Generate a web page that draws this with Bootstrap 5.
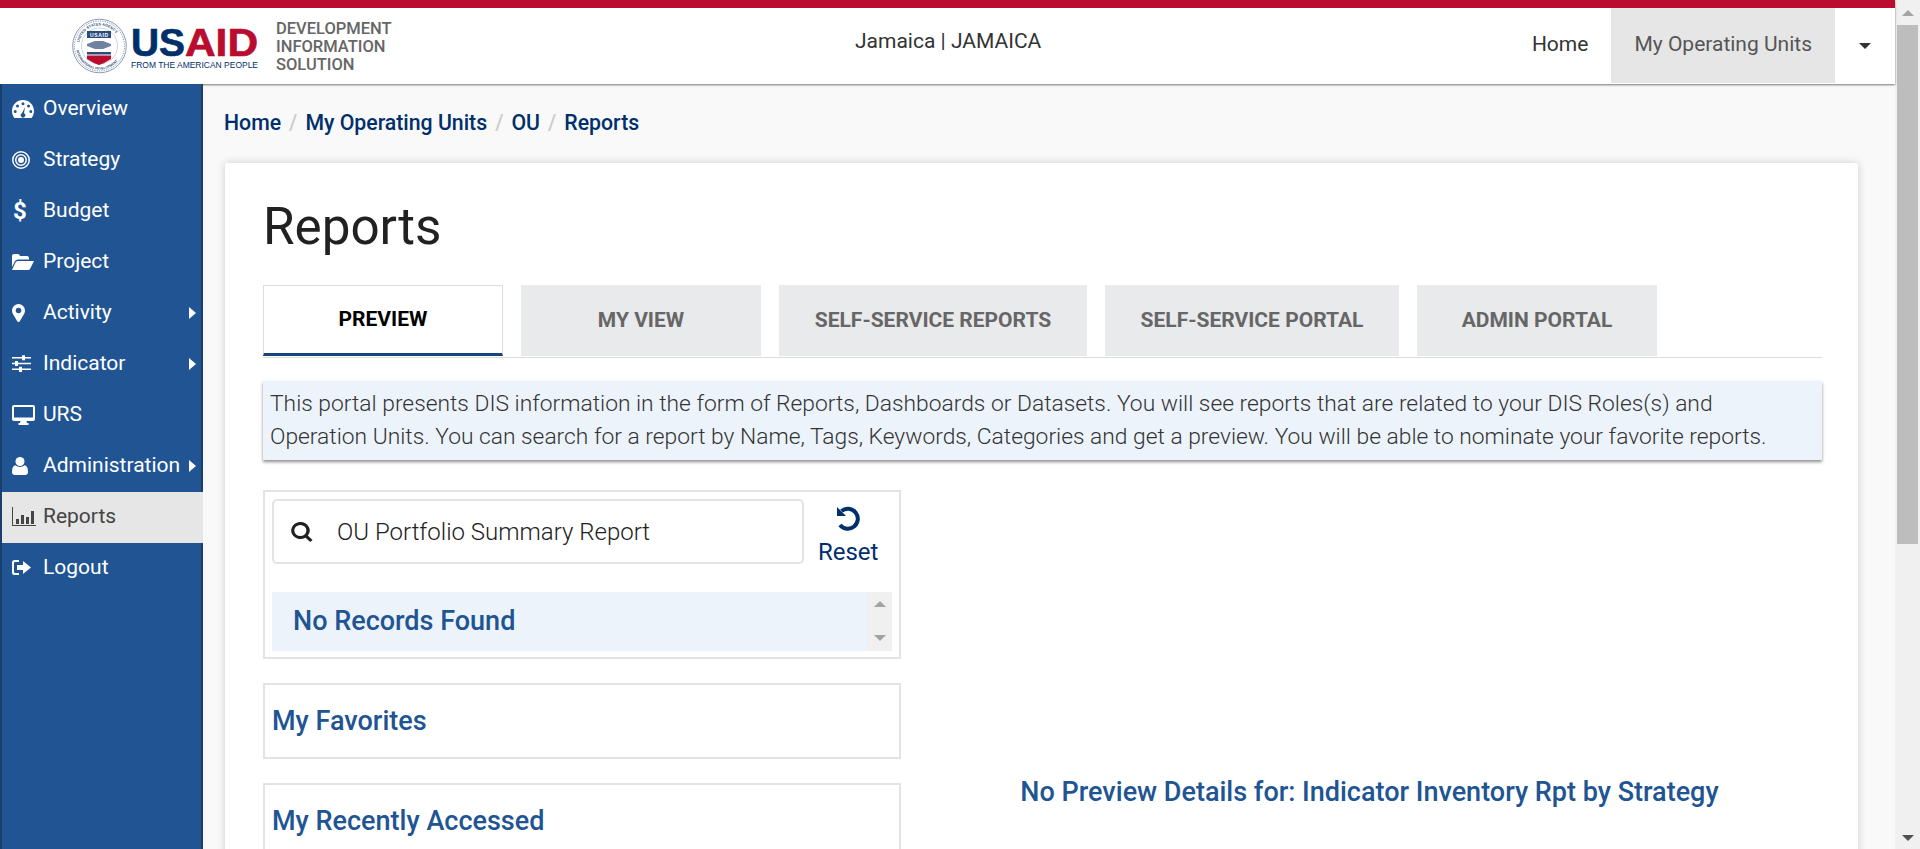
<!DOCTYPE html>
<html lang="en">
<head>
  <meta charset="UTF-8" />
  <title>Reports</title>
  <meta name="viewport" content="width=device-width, initial-scale=1" />
  <link href="https://cdn.jsdelivr.net/npm/bootstrap@5.3.0/dist/css/bootstrap.min.css" rel="stylesheet" />
  <style>
    html, body {
      height: 100%;
      overflow: hidden;
    }
    body {
      font-family: Roboto, "Liberation Sans", sans-serif;
      font-size: 21px;
      background: #f9f9f9;
      color: #212121;
    }

    /* top bar */
    .top-bar {
      height: 84px;
      flex: 0 0 84px;
      border-top: 8px solid #ba0c2f;
      background: #fff;
      box-shadow: 0 1px 2px #777;
      position: relative;
      z-index: 1;
      padding: 0;
    }
    .logo-wrap { width: 72px; flex: 0 0 72px; }
    .usaid-logo { display: block; }
    .dis-name {
      margin-left: 14px;
      width: 140px;
      font-size: 16.5px;
      line-height: 18px;
      font-weight: 500;
      color: #666;
      text-transform: uppercase;
    }
    .ou-name {
      position: absolute;
      left: 855px;
      top: 18px;
      color: #333;
      line-height: 30px;
    }
    .top-link {
      color: #333;
      display: flex;
      align-items: center;
      height: 75px;
      padding: 0 23px 2px;
      text-decoration: none;
    }
    .top-link.current { background: #e6e6e6; color: #555; }
    .top-caret {
      width: 60px;
      display: flex;
      justify-content: center;
      align-items: center;
    }
    .top-caret i {
      border-top: 6px solid #333;
      border-left: 6px solid transparent;
      border-right: 6px solid transparent;
      margin-top: 1px;
    }

    /* side menu */
    .side-menu {
      width: 203px;
      flex: 0 0 203px;
      background: #205493;
      border-left: 2px solid #1a3f6f;
      border-right: 2px solid #1a3f6f;
      position: relative;
      z-index: 2;
    }
    .side-menu .nav-link {
      height: 51px;
      width: 201px;
      padding: 0 0 2px 10px;
      color: #fff;
      display: flex;
      align-items: center;
      position: relative;
    }
    .side-menu .nav-link.active { background: #e6e6e6; color: #444; }
    .side-ico { width: 31px; flex: 0 0 31px; display: flex; align-items: center; }
    .side-ico svg { display: block; fill: currentColor; }
    .side-dollar { font-size: 24px; font-weight: 700; line-height: 1; padding-left: 1px; }
    .side-arrow {
      position: absolute;
      left: 187px;
      top: 19px;
      border-left: 7px solid #fff;
      border-top: 6.5px solid transparent;
      border-bottom: 6.5px solid transparent;
    }

    /* content */
    .main-area {
      padding: 0 37px 0 22px;
      min-width: 0;
    }
    .crumbs {
      margin: 0 0 0 -1px;
      height: 79px;
      padding: 23px 0 0;
      font-size: 21.28px;
      font-weight: 500;
      --bs-breadcrumb-divider-color: #ccc;
      --bs-breadcrumb-item-padding-x: 8px;
    }
    .crumbs a { color: #002f6c; text-decoration: none; }
    .report-card {
      border: 0;
      border-radius: 2px;
      box-shadow: 0 0 8px rgba(0, 0, 0, .18);
      padding: 35px 36px 0 38px;
      height: 800px;
    }
    .page-title {
      font-size: 51.2px;
      line-height: 58px;
      font-weight: 400;
      margin: 0 0 29px;
      color: #212121;
    }
    .report-tabs {
      gap: 18px;
      border-bottom: 1px solid #ddd;
      padding-bottom: 1px;
    }
    .report-tabs .nav-link {
      height: 71px;
      background: #e9eaec;
      color: #666;
      font-weight: 700;
      font-size: 21px;
      text-transform: uppercase;
      border-radius: 0;
      display: flex;
      align-items: center;
      justify-content: center;
      padding: 0;
    }
    .report-tabs .nav-link.active {
      background: #fff;
      color: #000;
      border: 1px solid #ddd;
      border-bottom: 3px solid #1a4480;
    }
    .info-note {
      margin: 23px 0 30px;
      background: #edf3fb;
      box-shadow: 0 2px 3px rgba(0, 0, 0, .45);
      padding: 6px 7px;
      line-height: 33px;
      height: 79px;
      font-size: 22.8px;
      color: #333;
      font-weight: 300;
      white-space: nowrap;
    }
    .left-pane { width: 638px; flex: 0 0 638px; }
    .right-pane { padding-top: 282px; text-align: center; color: #205493; font-size: 27px; font-weight: 500; }
    .pane-box {
      border: 2px solid #e3e3e3;
      padding: 7px 7px 6px;
      margin-bottom: 24px;
    }
    .search-wrap {
      width: 534px;
      height: 65px;
      border: 2px solid #e3e3e3;
      border-radius: 5px;
      padding: 0 14px 0 17px;
    }
    .search-wrap input {
      border: 0;
      padding: 0;
      margin-left: 24px;
      font-size: 24px;
      font-weight: 300;
      color: #212121;
      box-shadow: none;
    }
    .reset-btn {
      width: 88px;
      padding: 0;
      border: 0;
      color: #002f6c;
      font-size: 24px;
      line-height: 26px;
      margin-top: 5px;
    }
    .reset-btn svg { margin-bottom: 7px; flex: none; }
    .no-rows {
      margin-top: 27px;
      height: 59px;
      background: #edf3fb;
    }
    .no-rows span {
      padding-left: 21px;
      color: #205493;
      font-size: 27px;
      font-weight: 500;
    }
    .mini-scroll {
      width: 25px;
      background: #f0f0f0;
      padding: 9px 0 10px;
    }
    .pane-head {
      color: #205493;
      font-size: 27px;
      font-weight: 500;
      line-height: 32px;
      height: 72px;
      padding-top: 20px;
      margin: 0;
    }
    .pane-box.head-box { padding: 0 7px; }

    /* window scrollbar */
    .win-scroll {
      width: 25px;
      flex: 0 0 25px;
      background: #f0f0f0;
      padding: 10px 2px 8px;
    }
    .win-scroll i, .mini-scroll i { display: block; margin: 0 auto; width: 0; height: 0; flex: none; }
    .arrow-up {
      border-bottom: 6px solid #a3a3a3;
      border-left: 6px solid transparent;
      border-right: 6px solid transparent;
    }
    .arrow-down {
      border-top: 6px solid #a3a3a3;
      border-left: 6px solid transparent;
      border-right: 6px solid transparent;
    }
    .win-scroll .arrow-down { border-top-color: #505050; margin-top: auto; }
    .win-thumb { height: 519px; background: #bdbdbd; margin-top: 9px; }
  </style>
</head>
<body class="d-flex">
  <div class="d-flex flex-column flex-grow-1" style="min-width:0">
    <nav class="navbar top-bar flex-nowrap justify-content-start align-items-start">
      <div class="logo-wrap"></div>
      <svg class="usaid-logo" width="190" height="68" viewBox="0 0 190 68" xmlns="http://www.w3.org/2000/svg">
        <defs>
          <path id="sealTop" d="M7 38 A20.500 20.500 0 0 1 48 38" />
          <path id="sealBot" d="M4 38 A23.500 23.500 0 0 0 51 38" />
        </defs>
        <circle cx="27.500" cy="38" r="26.800" fill="#fff" stroke="#8a9bb4" stroke-width="1" />
        <circle cx="27.500" cy="38" r="25" fill="none" stroke="#2b4c7e" stroke-width=".7" stroke-dasharray="1 1.400" />
        <circle cx="27.500" cy="38" r="18" fill="none" stroke="#a9b6c9" stroke-width=".6" />
        <text font-family="Liberation Sans" font-size="3.800" font-weight="700" fill="#33507d"><textPath href="#sealTop" startOffset="6%">UNITED STATES AGENCY</textPath></text>
        <text font-family="Liberation Sans" font-size="3.300" font-weight="700" fill="#33507d"><textPath href="#sealBot" startOffset="6%">INTERNATIONAL DEVELOPMENT</textPath></text>
        <rect x="15" y="23" width="24" height="7" fill="#2b4c7e" />
        <text x="27" y="28.600" text-anchor="middle" font-family="Liberation Sans" font-size="5" font-weight="700" fill="#fff" textLength="18">USAID</text>
        <path d="M15 36 L23 33 L31 33 L39 36 L39 38 L31 41 L23 41 L15 38 Z" fill="#6f82a0" />
        <rect x="15" y="44" width="24" height="2.500" fill="#2b4c7e" />
        <path d="M15 47.500 H39 V51 Q33 55 27 57 Q21 55 15 51 Z" fill="#ba0c2f" />
        <text x="59" y="48" font-family="Liberation Sans" font-size="39" font-weight="700" fill="#002f6c" stroke="#002f6c" stroke-width=".7" textLength="54" lengthAdjust="spacingAndGlyphs">US</text>
        <text x="113" y="48" font-family="Liberation Sans" font-size="39" font-weight="700" fill="#ba0c2f" stroke="#ba0c2f" stroke-width=".7" textLength="73" lengthAdjust="spacingAndGlyphs">AID</text>
        <text x="59" y="60" font-family="Liberation Sans" font-size="9.500" fill="#002f6c" textLength="127" lengthAdjust="spacingAndGlyphs">FROM THE AMERICAN PEOPLE</text>
      </svg>
      <div class="dis-name mt-2 pt-1">Development Information Solution</div>
      <div class="ou-name">Jamaica | JAMAICA</div>
      <div class="d-flex ms-auto">
        <a class="top-link" href="#">Home</a>
        <a class="top-link current" href="#">My Operating Units</a>
        <div class="top-caret"><i></i></div>
      </div>
    </nav>

    <div class="d-flex flex-grow-1" style="min-height:0">
      <div class="side-menu nav flex-column flex-nowrap">
        <a class="nav-link" href="#"><span class="side-ico"><svg width="22" height="18" viewBox="0 0 22 18"><path fill-rule="evenodd" d="M11 0C4.900 0 0 4.900 0 11c0 2.600.9 5 2.400 7h17.200c1.500-2 2.400-4.400 2.400-7C22 4.900 17.100 0 11 0zM11 2.200a1.500 1.500 0 1 1 0 3 1.500 1.500 0 0 1 0-3zM5.500 4.500a1.500 1.500 0 1 1 0 3 1.500 1.500 0 0 1 0-3zM16.500 4.500a1.500 1.500 0 1 1 0 3 1.500 1.500 0 0 1 0-3zM3.200 10a1.500 1.500 0 1 1 0 3 1.500 1.500 0 0 1 0-3zM18.800 10a1.500 1.500 0 1 1 0 3 1.500 1.500 0 0 1 0-3zM13 7l-1 6.300a2.200 2.200 0 1 1-2 0z"/></svg></span>Overview</a>
        <a class="nav-link" href="#"><span class="side-ico"><svg width="18" height="18" viewBox="0 0 18 18"><path fill-rule="evenodd" d="M9 0a9 9 0 1 1 0 18A9 9 0 0 1 9 0zm0 1.500a7.500 7.500 0 1 0 0 15 7.500 7.500 0 0 0 0-15zM9 3a6 6 0 1 1 0 12A6 6 0 0 1 9 3zm0 1.500a4.500 4.500 0 1 0 0 9 4.500 4.500 0 0 0 0-9zM9 6a3 3 0 1 1 0 6 3 3 0 0 1 0-6z"/></svg></span>Strategy</a>
        <a class="nav-link" href="#"><span class="side-ico side-dollar">$</span>Budget</a>
        <a class="nav-link" href="#"><span class="side-ico"><svg width="22" height="16" viewBox="0 0 22 16"><path d="M0 13V2q0-2 2-2h3.500q1.500 0 2 1l.7 1H15q2 0 2 2v1.500H6q-2 0-3 1.500z"/><path d="M5.500 7H22l-4 8q-.5 1-2 1H0l3.500-7.500Q4.300 7 5.500 7z"/></svg></span>Project</a>
        <a class="nav-link" href="#"><span class="side-ico"><svg width="13" height="18" viewBox="0 0 13 18"><path fill-rule="evenodd" d="M6.500 0A6.500 6.500 0 0 1 13 6.500c0 1.300-.3 2.200-.8 3.200L7.800 17.200a1.500 1.500 0 0 1-2.600 0L.8 9.700C.3 8.700 0 7.800 0 6.500A6.500 6.500 0 0 1 6.500 0zm0 3.700a2.800 2.800 0 1 0 0 5.600 2.800 2.800 0 0 0 0-5.600z"/></svg></span>Activity<span class="side-arrow"></span></a>
        <a class="nav-link" href="#"><span class="side-ico"><svg width="19" height="17" viewBox="0 0 19 17"><path d="M0 2h10v1.500H0zM13 2h6v1.500h-6zM10 .3h3v5h-3zM0 7.800h3v1.500H0zM6 7.800h13v1.500H6zM3 6h3v5H3zM0 13.500h7V15H0zM10 13.500h9V15h-9zM7 11.800h3V17H7z"/></svg></span>Indicator<span class="side-arrow"></span></a>
        <a class="nav-link" href="#"><span class="side-ico"><svg width="23" height="20" viewBox="0 0 23 20"><path fill-rule="evenodd" d="M2 0h19q2 0 2 2v12q0 2-2 2h-6.500l.5 2h1.500v2h-10v-2H8l.5-2H2q-2 0-2-2V2q0-2 2-2zm0 2v10.500h19V2z"/></svg></span>URS</a>
        <a class="nav-link" href="#"><span class="side-ico"><svg width="16" height="18" viewBox="0 0 16 18"><circle cx="8" cy="4.500" r="4.500"/><path d="M3.300 8.300Q5.300 10 8 10t4.700-1.700Q16 9 16 15q0 3-3 3H3q-3 0-3-3 0-6 3.300-6.700z"/></svg></span>Administration<span class="side-arrow"></span></a>
        <a class="nav-link active" href="#"><span class="side-ico"><svg width="24" height="19" viewBox="0 0 24 19"><path d="M0 0h1v18h23v1H0z"/><path d="M4 12h3v5H4zM9 8h3v9H9zM14 10h3v7h-3zM19 4h3v13h-3z"/></svg></span>Reports</a>
        <a class="nav-link" href="#"><span class="side-ico"><svg width="19" height="15" viewBox="0 0 19 15"><path d="M2.500 0H7v2H3q-1 0-1 1v9q0 1 1 1h4v2H2.500Q0 15 0 12.500v-10Q0 0 2.500 0z"/><path d="M11 1l8 6.500-8 6.500v-4H5V5h6z"/></svg></span>Logout</a>
      </div>

      <main class="main-area flex-grow-1">
        <nav aria-label="breadcrumb">
          <ol class="breadcrumb crumbs">
            <li class="breadcrumb-item"><a href="#">Home</a></li>
            <li class="breadcrumb-item"><a href="#">My Operating Units</a></li>
            <li class="breadcrumb-item"><a href="#">OU</a></li>
            <li class="breadcrumb-item"><a href="#">Reports</a></li>
          </ol>
        </nav>

        <div class="card report-card">
          <h1 class="page-title">Reports</h1>

          <ul class="nav report-tabs">
            <li class="nav-item"><a class="nav-link active" style="width:240px" href="#">Preview</a></li>
            <li class="nav-item"><a class="nav-link" style="width:240px" href="#">My View</a></li>
            <li class="nav-item"><a class="nav-link" style="width:308px" href="#">Self-Service Reports</a></li>
            <li class="nav-item"><a class="nav-link" style="width:294px" href="#">Self-Service Portal</a></li>
            <li class="nav-item"><a class="nav-link" style="width:240px" href="#">Admin Portal</a></li>
          </ul>

          <div class="info-note">This portal presents DIS information in the form of Reports, Dashboards or Datasets. You will see reports that are related to your DIS Roles(s) and<br />Operation Units. You can search for a report by Name, Tags, Keywords, Categories and get a preview. You will be able to nominate your favorite reports.</div>

          <div class="d-flex">
            <div class="left-pane">
              <div class="pane-box">
                <div class="d-flex">
                  <div class="search-wrap d-flex align-items-center">
                    <svg width="22" height="20" viewBox="0 0 20 20" fill="#212121" style="flex:none" preserveAspectRatio="none"><path fill-rule="evenodd" d="M8.500 0a8.500 8.500 0 0 1 6.800 13.600l4.300 4.300-2.100 2.100-4.300-4.300A8.500 8.500 0 1 1 8.500 0zm0 3a5.500 5.500 0 1 0 0 11 5.500 5.500 0 0 0 0-11z"/></svg>
                    <input class="form-control" type="text" value="OU Portfolio Summary Report" />
                  </div>
                  <button class="btn reset-btn d-flex flex-column align-items-center" type="button">
                    <svg width="28" height="28" viewBox="0 0 28 28" fill="none" stroke="#002f6c" stroke-width="4"><path d="M7.500 7A10 10 0 1 1 6 21"/><path d="M3 3v9h9z" fill="#002f6c" stroke="none"/></svg>
                    Reset
                  </button>
                </div>
                <div class="no-rows d-flex">
                  <span class="flex-grow-1 align-self-center">No Records Found</span>
                  <div class="mini-scroll d-flex flex-column justify-content-between"><i class="arrow-up"></i><i class="arrow-down"></i></div>
                </div>
              </div>
              <div class="pane-box head-box"><h5 class="pane-head">My Favorites</h5></div>
              <div class="pane-box head-box"><h5 class="pane-head">My Recently Accessed</h5></div>
            </div>
            <div class="right-pane flex-grow-1 ms-3">No Preview Details for: Indicator Inventory Rpt by Strategy</div>
          </div>
        </div>
      </main>
    </div>
  </div>
  <div class="win-scroll d-flex flex-column"><i class="arrow-up"></i><div class="win-thumb"></div><i class="arrow-down"></i></div>
  <script src="https://cdn.jsdelivr.net/npm/bootstrap@5.3.0/dist/js/bootstrap.bundle.min.js"></script>
</body>
</html>
